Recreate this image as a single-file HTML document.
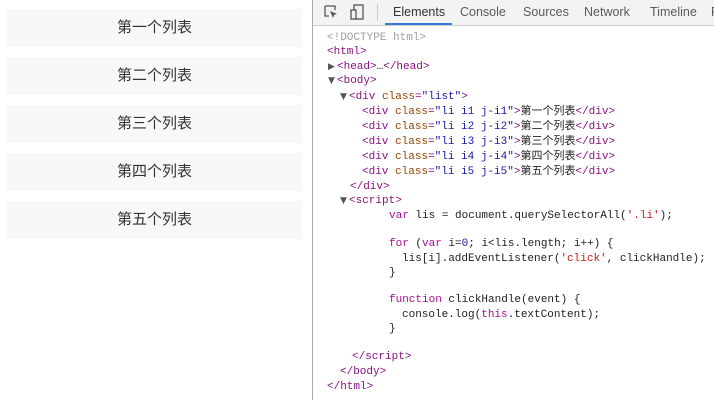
<!DOCTYPE html>
<html><head><meta charset="utf-8"><style>
body{margin:0;width:714px;height:400px;background:#fff;position:relative;overflow:hidden;font-family:"Liberation Sans","Noto Sans CJK SC",sans-serif}
.li{position:absolute;left:7px;width:295px;height:38px;background:#f8f8f8;text-align:center;line-height:38px;font-size:15px;color:#333}
#dt{position:absolute;left:312px;top:0;width:402px;height:400px;border-left:1px solid #aaa;background:#fff}
#tb{position:absolute;left:0;top:0;right:0;height:25px;background:#f3f3f3;border-bottom:1px solid #ccc;font-size:12.5px;color:#5a5a5a}
#tb span{position:absolute;top:5px}
.l{position:absolute;font-family:"Liberation Mono","Noto Sans CJK SC",monospace;font-size:11px;white-space:pre;line-height:14px;color:#222}
.t{color:#881280}.a{color:#994500}.v{color:#1a1aa6}.g{color:#a0a0a0}.k{color:#aa0d91}.s{color:#c41a16}
.ar{display:inline-block;width:9px;color:#555;font-family:"DejaVu Sans",sans-serif;font-size:9px;line-height:14px;vertical-align:top}
</style></head><body>
<div class="li" style="top:9px">第一个列表</div>
<div class="li" style="top:57px">第二个列表</div>
<div class="li" style="top:105px">第三个列表</div>
<div class="li" style="top:153px">第四个列表</div>
<div class="li" style="top:201px">第五个列表</div>
<div id="dt">
<div id="tb">
<svg style="position:absolute;left:11px;top:5px" width="14" height="14" viewBox="0 0 14 14"><path d="M1 1h10v4M1 1v10h4" fill="none" stroke="#555" stroke-width="1.3"/><path d="M6 6l7 3-3 1-1 3z" fill="#555"/></svg>
<svg style="position:absolute;left:37px;top:4px" width="14" height="16" viewBox="0 0 14 16"><rect x="4" y="1" width="9" height="14" fill="none" stroke="#555" stroke-width="1.3"/><rect x="1" y="6" width="5" height="9" fill="#f3f3f3" stroke="#555" stroke-width="1.3"/></svg>
<div style="position:absolute;left:64px;top:4px;width:1px;height:17px;background:#ccc"></div>
<span style="left:80px;color:#333">Elements</span>
<div style="position:absolute;left:72px;top:23px;width:67px;height:2px;background:#3879d9"></div>
<span style="left:147px">Console</span>
<span style="left:210px">Sources</span>
<span style="left:271px">Network</span>
<span style="left:337px">Timeline</span>
<span style="left:398px">P</span>
</div>
</div>
<div class="l g" style="left:327px;top:31px">&lt;!DOCTYPE html&gt;</div>
<div class="l t" style="left:327px;top:45px">&lt;html&gt;</div>
<div class="l" style="left:328px;top:60px"><span class="ar">▶</span><span class="t">&lt;head&gt;</span>…<span class="t">&lt;/head&gt;</span></div>
<div class="l" style="left:328px;top:74px"><span class="ar">▼</span><span class="t">&lt;body&gt;</span></div>
<div class="l" style="left:340px;top:90px"><span class="ar">▼</span><span class="t">&lt;div </span><span class="a">class</span><span class="t">=</span><span class="v">"list"</span><span class="t">&gt;</span></div>
<div class="l" style="left:362px;top:105px"><span class="t">&lt;div </span><span class="a">class</span><span class="t">=</span><span class="v">"li i1 j-i1"</span><span class="t">&gt;</span>第一个列表<span class="t">&lt;/div&gt;</span></div>
<div class="l" style="left:362px;top:120px"><span class="t">&lt;div </span><span class="a">class</span><span class="t">=</span><span class="v">"li i2 j-i2"</span><span class="t">&gt;</span>第二个列表<span class="t">&lt;/div&gt;</span></div>
<div class="l" style="left:362px;top:135px"><span class="t">&lt;div </span><span class="a">class</span><span class="t">=</span><span class="v">"li i3 j-i3"</span><span class="t">&gt;</span>第三个列表<span class="t">&lt;/div&gt;</span></div>
<div class="l" style="left:362px;top:150px"><span class="t">&lt;div </span><span class="a">class</span><span class="t">=</span><span class="v">"li i4 j-i4"</span><span class="t">&gt;</span>第四个列表<span class="t">&lt;/div&gt;</span></div>
<div class="l" style="left:362px;top:165px"><span class="t">&lt;div </span><span class="a">class</span><span class="t">=</span><span class="v">"li i5 j-i5"</span><span class="t">&gt;</span>第五个列表<span class="t">&lt;/div&gt;</span></div>
<div class="l t" style="left:350px;top:180px">&lt;/div&gt;</div>
<div class="l" style="left:340px;top:194px"><span class="ar">▼</span><span class="t">&lt;script&gt;</span></div>
<div class="l" style="left:389px;top:209px"><span class="k">var</span> lis = document.querySelectorAll(<span class="s">'.li'</span>);</div>
<div class="l" style="left:389px;top:237px"><span class="k">for</span> (<span class="k">var</span> i=<span class="v">0</span>; i&lt;lis.length; i++) {</div>
<div class="l" style="left:402px;top:252px">lis[i].addEventListener(<span class="s">'click'</span>, clickHandle);</div>
<div class="l" style="left:389px;top:266px">}</div>
<div class="l" style="left:389px;top:293px"><span class="k">function</span> clickHandle(event) {</div>
<div class="l" style="left:402px;top:308px">console.log(<span class="k">this</span>.textContent);</div>
<div class="l" style="left:389px;top:322px">}</div>
<div class="l t" style="left:352px;top:350px">&lt;/script&gt;</div>
<div class="l t" style="left:340px;top:365px">&lt;/body&gt;</div>
<div class="l t" style="left:327px;top:380px">&lt;/html&gt;</div>
</body></html>
